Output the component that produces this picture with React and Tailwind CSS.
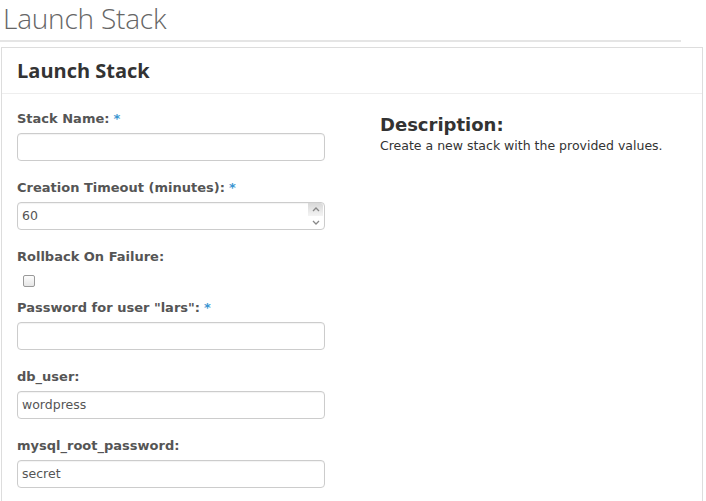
import React from "react";

const Label = ({ children, req }) => (
  <div className="h-[18px] leading-[18px] text-[13px] font-bold text-[#555] whitespace-nowrap" style={{ fontFamily: '"DejaVu Sans", sans-serif' }}>
    {children}
    {req && <span className="text-[#3a95d1] ml-[4px]">*</span>}
  </div>
);

const Input = ({ value = "", spinner = false }) => (
  <div className="mt-[5px] h-[28px] w-[308px] rounded-[4px] border border-[#ccc] bg-white flex items-center shadow-[inset_0_1px_1px_rgba(0,0,0,0.05)]">
    <span className="flex-1 pl-[4px] text-[12.5px] text-[#555]" style={{ fontFamily: '"DejaVu Sans", sans-serif' }}>{value}</span>
    {spinner && (
      <div className="h-full w-[15px] flex flex-col mr-[1px]">
        <div className="flex-1 flex items-center justify-center bg-gradient-to-b from-[#d8d8d8] to-[#f4f4f4] rounded-tr-[3px]">
          <svg width="8" height="5" viewBox="0 0 8 5"><path d="M1 4 L4 1 L7 4" fill="none" stroke="#888" strokeWidth="1.3" /></svg>
        </div>
        <div className="flex-1 flex items-center justify-center">
          <svg width="8" height="5" viewBox="0 0 8 5"><path d="M1 1 L4 4 L7 1" fill="none" stroke="#888" strokeWidth="1.3" /></svg>
        </div>
      </div>
    )}
  </div>
);

export default function App() {
  return (
    <div className="w-[706px] h-[501px] overflow-hidden bg-white" style={{ fontFamily: '"DejaVu Sans", sans-serif' }}>
      <div className="w-[681px] h-[42px] border-b-2 border-[#e5e5e5]">
        <div className="pl-[3px] h-[38px] leading-[36px] text-[28px] font-light text-[#666]" style={{ fontFamily: '"Open Sans", sans-serif', letterSpacing: "-0.2px" }}>
          Launch Stack
        </div>
      </div>
      <div className="mt-[5px] ml-[1px] w-[702px] h-[460px] border border-b-0 border-[#ddd]">
        <div className="h-[46px] px-[15px] flex items-center border-b border-[#eee]">
          <span className="text-[20px] font-bold text-[#333]" style={{ fontFamily: '"Open Sans", sans-serif' }}>Launch Stack</span>
        </div>
        <div className="flex px-[15px] pt-[16px]">
          <div className="w-[308px] flex flex-col">
            <Label req>Stack Name:</Label>
            <Input />
            <div className="h-[18px]" />
            <Label req>Creation Timeout (minutes):</Label>
            <Input value="60" spinner />
            <div className="h-[18px]" />
            <Label>Rollback On Failure:</Label>
            <div className="mt-[9px] mb-[12px] ml-[6px] w-[12px] h-[12px] rounded-[2px] border border-[#999] bg-gradient-to-b from-[#fdfdfd] to-[#e6e6e6]" />
            <Label req>Password for user "lars":</Label>
            <Input />
            <div className="h-[18px]" />
            <Label>db_user:</Label>
            <Input value="wordpress" />
            <div className="h-[18px]" />
            <Label>mysql_root_password:</Label>
            <Input value="secret" />
          </div>
          <div className="ml-[55px] pt-[5px]">
            <div className="h-[20px] leading-[20px] text-[18px] font-bold text-[#333]">Description:</div>
            <div className="mt-[3px] leading-[16px] text-[12.5px] text-[#333]">Create a new stack with the provided values.</div>
          </div>
        </div>
      </div>
    </div>
  );
}
